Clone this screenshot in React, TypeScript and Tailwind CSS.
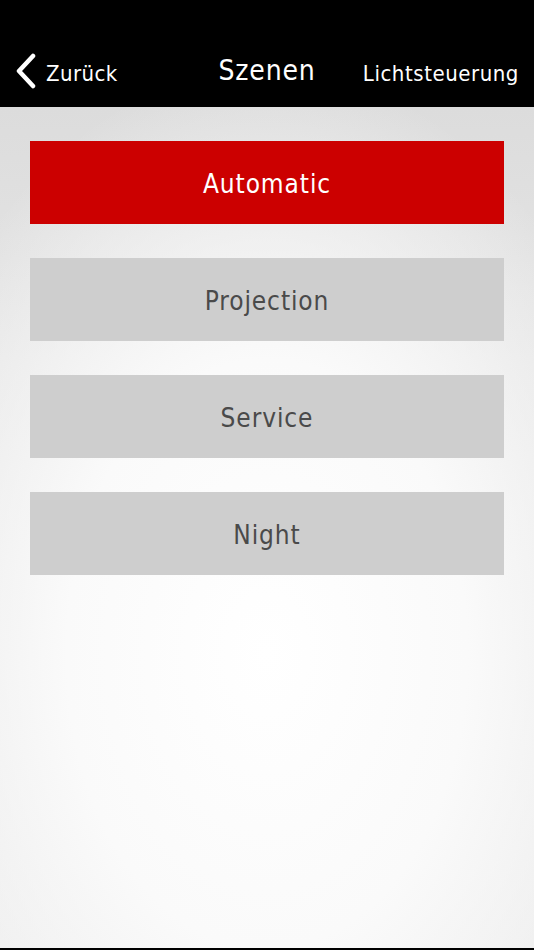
import React from 'react';

const scenes = [
  { name: 'Automatic', active: true },
  { name: 'Projection', active: false },
  { name: 'Service', active: false },
  { name: 'Night', active: false },
];

export default function App() {
  return (
    <div
      className="flex h-[950px] w-[534px] flex-col overflow-hidden"
      style={{ fontFamily: '"DejaVu Sans Condensed", Roboto, "Liberation Sans", sans-serif' }}
    >
      {/* header */}
      <div className="relative flex h-[107px] shrink-0 items-end bg-black pb-[22px] text-white">
        <div className="flex items-end pl-[14px]">
          <svg width="24" height="36" viewBox="0 0 24 36" className="mb-[-4px]">
            <path d="M19 3 L5 18 L19 33" fill="none" stroke="white" strokeWidth="4.5" strokeLinecap="round" strokeLinejoin="round" />
          </svg>
          <span className="ml-[8px] text-[22px] leading-none tracking-[0.02em]">Zurück</span>
        </div>
        <span className="absolute bottom-[22px] left-0 right-0 text-center text-[28px] leading-none tracking-[0.03em]">
          Szenen
        </span>
        <span className="ml-auto pr-[15px] text-[22px] leading-none tracking-[0.025em]">Lichtsteuerung</span>
      </div>

      {/* content */}
      <div className="flex flex-1 flex-col border-b-2 border-black bg-[radial-gradient(ellipse_75%_70%_at_50%_65%,#ffffff_0%,#fafafa_50%,rgba(250,250,250,0)_100%),linear-gradient(to_bottom,#dcdcdc_0%,#e6e6e6_30%,#ececec_100%)]">
        <div className="flex flex-col gap-[34px] px-[30px] pt-[34px]">
          {scenes.map((s) => (
            <button
              key={s.name}
              className={
                s.active
                  ? 'flex h-[83px] items-center justify-center bg-[#cc0000] pt-[4px] text-[26px] tracking-[0.035em] text-white'
                  : 'flex h-[83px] items-center justify-center bg-[#cecece] pt-[4px] text-[26px] tracking-[0.035em] text-[#4a4a4a]'
              }
            >
              {s.name}
            </button>
          ))}
        </div>
      </div>
    </div>
  );
}
